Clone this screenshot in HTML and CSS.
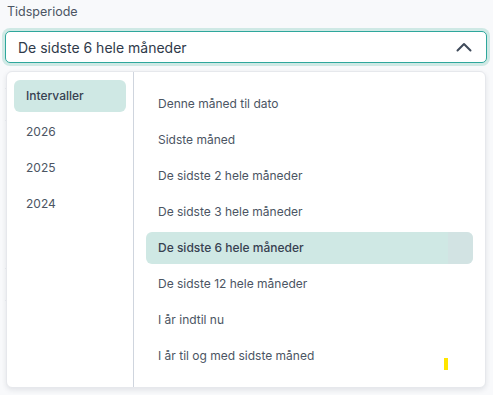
FILE: index.html
```html
<!DOCTYPE html>
<html lang="da">
<head>
    <meta charset="UTF-8">
    <meta name="viewport" content="width=device-width, initial-scale=1.0">
    <title>Tidsperiode</title>
    <link rel="stylesheet" href="styles.css">
</head>
<body>
    <div class="field">
        <label class="field-label">Tidsperiode</label>
        <div class="select">
            <span>De sidste 6 hele måneder</span>
            <svg class="chevron" width="18" height="18" viewBox="0 0 18 18" fill="none">
                <path d="M2.5 12.5 L9 6 L15.5 12.5" stroke="#3f4a5a" stroke-width="2" stroke-linecap="round" stroke-linejoin="round"/>
            </svg>
        </div>

        <!-- rows of the page behind the dropdown -->
        <div class="page-rows">
            <div class="row"></div>
            <div class="row"></div>
            <div class="row gap"></div>
            <div class="row"></div>
        </div>

        <div class="dropdown">
            <ul class="groups">
                <li class="group active">Intervaller</li>
                <li class="group">2026</li>
                <li class="group">2025</li>
                <li class="group">2024</li>
            </ul>
            <ul class="options">
                <li class="option">Denne måned til dato</li>
                <li class="option">Sidste måned</li>
                <li class="option">De sidste 2 hele måneder</li>
                <li class="option">De sidste 3 hele måneder</li>
                <li class="option selected">De sidste 6 hele måneder</li>
                <li class="option">De sidste 12 hele måneder</li>
                <li class="option">I år indtil nu</li>
                <li class="option">I år til og med sidste måned</li>
            </ul>
            <span class="marker"></span>
        </div>
    </div>
</body>
</html>
```

FILE: styles.css
```css
* {
    margin: 0;
    padding: 0;
    box-sizing: border-box;
}

body {
    font-family: Inter, 'Noto Sans', sans-serif;
    background-color: #f8f9fb;
    color: #4b5563;
    height: 395px;
    overflow: hidden;
}

.field {
    position: relative;
    padding: 4px 7px 0 5px;
}

.field-label {
    display: block;
    font-size: 12.5px;
    line-height: 16px;
    color: #4b5563;
    padding-left: 2px;
    margin-bottom: 11px;
}

.select {
    display: flex;
    align-items: center;
    justify-content: space-between;
    width: 482px;
    height: 32px;
    padding: 0 13px 0 12px;
    background: white;
    border: 1px solid #2ea79c;
    border-radius: 5px;
    box-shadow: 0 0 0 3px #cfe9e5;
    font-size: 14px;
    color: #2f3a4a;
}

.page-rows {
    margin-top: 25px;
}

.row {
    height: 32px;
    border-top: 1px solid #eceef2;
}

.row.gap {
    margin-top: 116px;
}

.dropdown {
    position: absolute;
    left: 6px;
    top: 71px;
    width: 480px;
    height: 317px;
    display: flex;
    background: white;
    border: 1px solid #e6e8ec;
    border-radius: 6px;
    box-shadow: 0 2px 5px rgba(30, 40, 60, 0.1);
}

.groups,
.options {
    list-style: none;
    display: flex;
    flex-direction: column;
    gap: 4px;
}

.groups {
    width: 127px;
    padding: 8px 7px;
    border-right: 1px solid #cfd5de;
}

.options {
    flex: 1;
    padding: 16px 12px;
}

.group,
.option {
    height: 32px;
    line-height: 32px;
    padding-left: 12px;
    border-radius: 6px;
    font-size: 12px;
    color: #4b5563;
}

.group.active,
.option.selected {
    background-color: #cfe8e4;
    font-weight: 500;
    color: #374151;
}

.option.selected {
    position: relative;
}

.option.selected::after {
    content: "";
    position: absolute;
    right: 0;
    top: 0;
    width: 25px;
    height: 32px;
    border-radius: 0 6px 6px 0;
    background: rgba(214, 222, 226, 0.55);
}

.marker {
    position: absolute;
    left: 437px;
    top: 286px;
    width: 4px;
    height: 12px;
    background: #ffe500;
}
```
